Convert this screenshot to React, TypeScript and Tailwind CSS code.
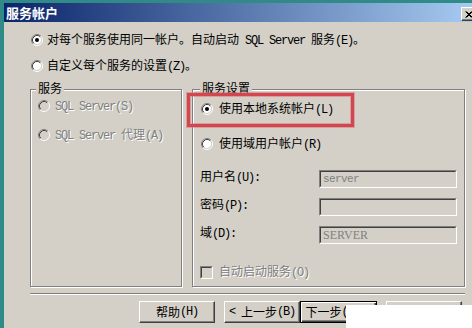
import React from "react";

const MONO = "font-['Liberation_Mono',monospace] text-[12px] tracking-[-1.2px] whitespace-pre";
const DIS = "text-[#808080] [text-shadow:1px_1px_0_#ffffff]";

function T({ s }: { s: string }) {
  const parts = s.split(/([\x20-\x7e]+)/);
  return (
    <>
      {parts.map((p, i) =>
        p === "" ? null : /^[\x20-\x7e]+$/.test(p) ? (
          <span key={i} className={MONO}>
            {p}
          </span>
        ) : (
          <span key={i}>{p}</span>
        )
      )}
    </>
  );
}

function Radio({ checked, disabled }: { checked?: boolean; disabled?: boolean }) {
  return (
    <svg width="12" height="12" viewBox="0 0 12 12" className="shrink-0">
      <circle cx="6" cy="6" r="4.5" fill={disabled ? "#d4d0c8" : "#ffffff"} />
      <path d="M2.11 9.89A5.5 5.5 0 0 1 9.89 2.11" stroke="#808080" fill="none" />
      <path d="M9.89 2.11A5.5 5.5 0 0 1 2.11 9.89" stroke="#ffffff" fill="none" />
      <path d="M2.82 9.18A4.5 4.5 0 0 1 9.18 2.82" stroke="#404040" fill="none" />
      <path d="M9.18 2.82A4.5 4.5 0 0 1 2.82 9.18" stroke="#d4d0c8" fill="none" />
      {checked && <circle cx="6" cy="6" r="2" fill={disabled ? "#808080" : "#000000"} />}
    </svg>
  );
}

function Checkbox() {
  return (
    <div className="w-[13px] h-[13px] shrink-0 border border-t-[#808080] border-l-[#808080] border-b-white border-r-white">
      <div className="w-full h-full bg-[#d4d0c8] border border-t-[#404040] border-l-[#404040] border-b-[#d4d0c8] border-r-[#d4d0c8]" />
    </div>
  );
}

function Field({ value, serif }: { value: string; serif?: boolean }) {
  return (
    <div className="w-[138px] h-[18px] shrink-0 bg-[#d4d0c8] border border-t-[#808080] border-l-[#808080] border-b-white border-r-white">
      <div className="w-full h-full border border-t-[#404040] border-l-[#404040] border-b-[#d4d0c8] border-r-[#d4d0c8] flex items-center pl-[2px]">
        <span
          className={
            serif
              ? "font-['Liberation_Serif',serif] text-[12px] text-[#808080] leading-[14px]"
              : "font-['Liberation_Mono',monospace] text-[11px] tracking-[-0.6px] text-[#808080] leading-[14px]"
          }
        >
          {value}
        </span>
      </div>
    </div>
  );
}

function Btn({ children, def }: { children: React.ReactNode; def?: boolean }) {
  return (
    <div
      className={
        def
          ? "w-[77px] h-[22px] shrink-0 flex items-center justify-center bg-[#d4d0c8] border border-black shadow-[inset_1px_1px_0_#ffffff,inset_-1px_-1px_0_#404040,inset_-2px_-2px_0_#808080]"
          : "w-[76px] h-[22px] shrink-0 flex items-center justify-center bg-[#d4d0c8] border-t border-l border-t-white border-l-white border-b border-r border-b-[#404040] border-r-[#404040] shadow-[inset_-1px_-1px_0_#808080]"
      }
    >
      {children}
    </div>
  );
}

export default function App() {
  return (
    <div className="relative w-[472px] h-[328px] overflow-hidden bg-[#2f8a88] pt-[3px] pl-[4px] flex flex-col font-['Noto_Sans_CJK_SC','Noto_Sans_CJK_JP',sans-serif]">
      {/* Title bar */}
      <div className="h-[19px] shrink-0 flex items-start bg-[linear-gradient(to_right,#0a246a,#a6caf0)] pl-[2px]">
        <span className="text-white font-bold text-[13px] leading-[19px]">服务帐户</span>
        <div className="ml-auto -mr-[5px] mt-[4px] w-[16px] h-[14px] shrink-0 flex items-center justify-center bg-[#d4d0c8] border-t border-l border-t-white border-l-white border-b border-r border-b-[#404040] border-r-[#404040] shadow-[inset_-1px_-1px_0_#808080]">
          <svg width="8" height="7" viewBox="0 0 8 7">
            <path d="M0.5 0.5L6.5 6.5M1.5 0.5L7.5 6.5M6.5 0.5L0.5 6.5M7.5 0.5L1.5 6.5" stroke="#000" strokeWidth="1" />
          </svg>
        </div>
      </div>

      {/* Body */}
      <div className="flex-1 bg-[#d4d0c8] pl-[26px] pr-[7px] pt-[10px] flex flex-col text-[12px] text-black leading-[16px]">
        <div className="h-[16px] ml-[1px] flex items-center gap-[4px]">
          <Radio checked />
          <span className="whitespace-nowrap">
            <T s="对每个服务使用同一帐户。自动启动 SQL Server 服务(E)。" />
          </span>
        </div>
        <div className="h-[16px] ml-[1px] mt-[10px] flex items-center gap-[4px]">
          <Radio />
          <span className="whitespace-nowrap">
            <T s="自定义每个服务的设置(Z)。" />
          </span>
        </div>

        <div className="mt-[15px] h-[198px] shrink-0 flex gap-[10px]">
          {/* Left group */}
          <div className="relative w-[152px] shrink-0 border border-[#808080] shadow-[inset_1px_1px_0_#ffffff,1px_1px_0_#ffffff] pt-[8px] pl-[7px] flex flex-col">
            <span className="absolute left-[5px] top-[-9px] px-[2px] bg-[#d4d0c8] leading-[14px]">服务</span>
            <div className={`h-[16px] flex items-center gap-[5px] ${DIS}`}>
              <Radio disabled />
              <span className="whitespace-nowrap">
                <T s="SQL Server(S)" />
              </span>
            </div>
            <div className={`h-[16px] mt-[13px] flex items-center gap-[5px] ${DIS}`}>
              <Radio disabled />
              <span className="whitespace-nowrap">
                <T s="SQL Server 代理(A)" />
              </span>
            </div>
          </div>

          {/* Right group */}
          <div className="relative flex-1 border border-[#808080] shadow-[inset_1px_1px_0_#ffffff,1px_1px_0_#ffffff] pt-[11px] pl-[8px] flex flex-col">
            <span className="absolute left-[7px] top-[-9px] px-[2px] bg-[#d4d0c8] leading-[14px]">服务设置</span>
            <div className="absolute left-[-6px] top-[3px] w-[167px] h-[34px] border-[3px] border-[#d2474d] shadow-[0_0_0_1px_rgba(220,110,115,0.5),inset_0_0_0_1px_rgba(220,110,115,0.5)]" />
            <div className="h-[16px] flex items-center gap-[6px]">
              <Radio checked />
              <span className="whitespace-nowrap">
                <T s="使用本地系统帐户(L)" />
              </span>
            </div>
            <div className="h-[16px] mt-[19px] flex items-center gap-[6px]">
              <Radio />
              <span className="whitespace-nowrap">
                <T s="使用域用户帐户(R)" />
              </span>
            </div>

            <div className="mt-[18px] h-[18px] flex items-start -ml-[1px]">
              <span className="w-[119px] shrink-0 leading-[12px] whitespace-nowrap">
                <T s="用户名(U):" />
              </span>
              <Field value="server" />
            </div>
            <div className="mt-[10px] h-[18px] flex items-start -ml-[1px]">
              <span className="w-[119px] shrink-0 leading-[12px] whitespace-nowrap">
                <T s="密码(P):" />
              </span>
              <Field value="" />
            </div>
            <div className="mt-[10px] h-[18px] flex items-start -ml-[1px]">
              <span className="w-[119px] shrink-0 leading-[12px] whitespace-nowrap">
                <T s="域(D):" />
              </span>
              <Field value="SERVER" serif />
            </div>

            <div className="mt-[20px] h-[16px] flex items-center gap-[6px] -ml-[1px]">
              <Checkbox />
              <span className={`whitespace-nowrap ${DIS}`}>
                <T s="自动启动服务(O)" />
              </span>
            </div>
          </div>
        </div>

        {/* Separator */}
        <div className="mt-[6px] h-[2px] shrink-0 border-t border-t-[#808080] border-b border-b-white" />

        {/* Buttons */}
        <div className="mt-[6px] h-[22px] shrink-0 flex">
          <div className="ml-[109px]">
            <Btn>
              <T s="帮助(H)" />
            </Btn>
          </div>
          <div className="ml-[9px]">
            <Btn>
              <T s="< 上一步(B)" />
            </Btn>
          </div>
          <Btn def>
            <T s="下一步(N) >" />
          </Btn>
          <div className="ml-[9px]">
            <Btn>取消</Btn>
          </div>
        </div>
      </div>

      {/* watermark cover */}
      <div className="absolute left-[346px] top-[305px] w-[126px] h-[23px] bg-white" />
    </div>
  );
}
